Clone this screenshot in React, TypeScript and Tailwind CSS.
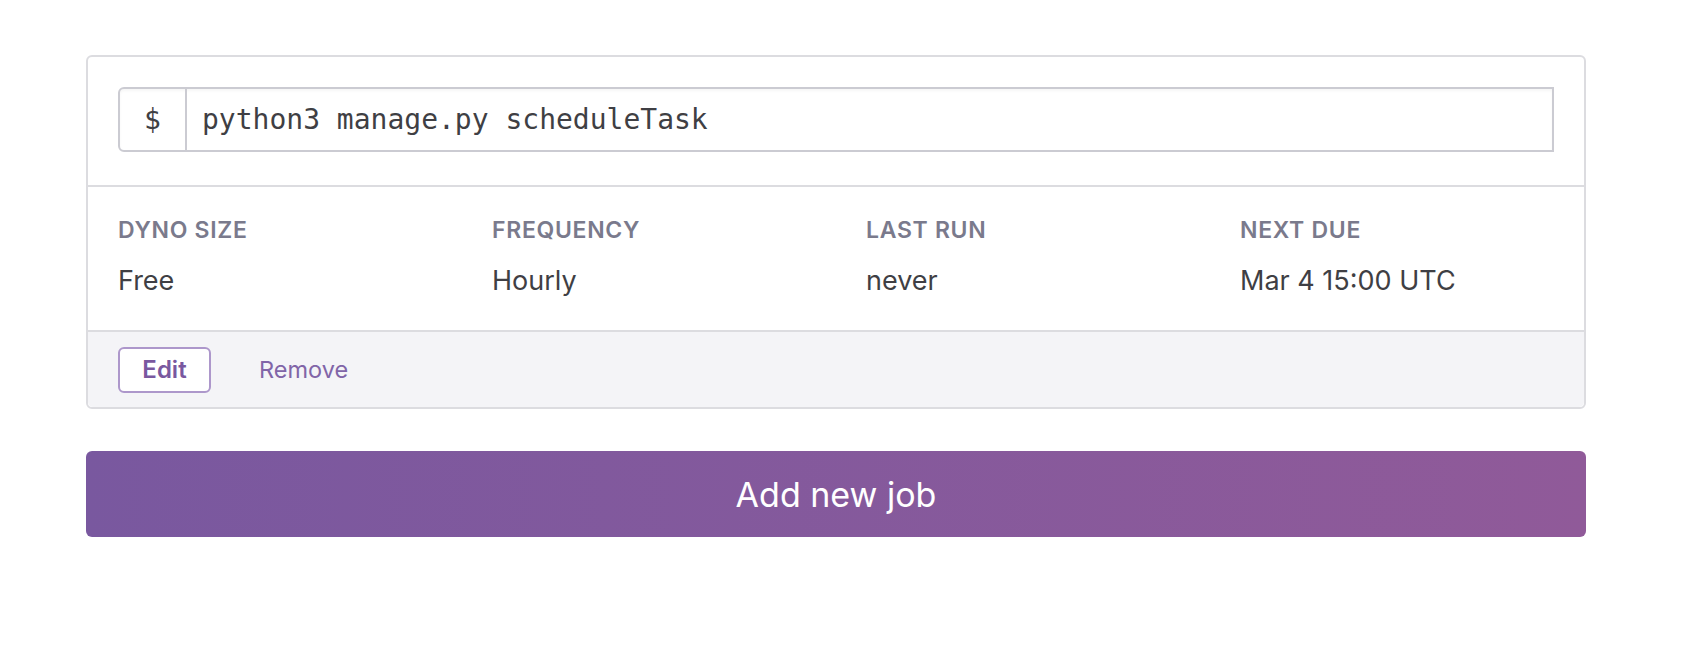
import React from 'react'

const details = [
  { label: 'DYNO SIZE', value: 'Free' },
  { label: 'FREQUENCY', value: 'Hourly' },
  { label: 'LAST RUN', value: 'never' },
  { label: 'NEXT DUE', value: 'Mar 4 15:00 UTC' },
]

export default function App() {
  return (
    <div className="min-h-[646px] bg-white pl-[86px] pt-[55px] font-['Inter',sans-serif]">
      <div className="w-[1500px]">
        <div className="rounded-[6px] border-2 border-[#dcdce0] bg-white">
          <div className="px-[30px] pt-[30px] pb-[33px]">
            <div className="flex h-[65px] items-stretch rounded-l-[6px] border-2 border-[#cbcbd2] bg-white shadow-[inset_0_2px_3px_rgba(0,0,0,0.04)]">
              <div className="flex w-[67px] items-center justify-center border-r-2 border-[#cbcbd2] font-['DejaVu_Sans_Mono',monospace] text-[28px] text-[#3f3f44]">
                $
              </div>
              <div className="flex items-center pl-[15px] font-['DejaVu_Sans_Mono',monospace] text-[28px] text-[#3f3f44]">
                python3 manage.py scheduleTask
              </div>
            </div>
          </div>
          <div className="flex border-t-2 border-[#dcdce0] px-[30px] pt-[30px] pb-[33px]">
            {details.map((d) => (
              <div key={d.label} className="w-[374px] shrink-0">
                <div className="text-[23px] leading-[26px] font-semibold tracking-[0.03em] text-[#7a7a8c]">{d.label}</div>
                <div className="mt-[22px] text-[27px] leading-[32px] text-[#3f3f44]">{d.value}</div>
              </div>
            ))}
          </div>
          <div className="flex items-center rounded-b-[5px] border-t-2 border-[#dcdce0] bg-[#f4f4f7] px-[30px] pt-[15px] pb-[14px]">
            <button className="flex h-[46px] w-[93px] items-center justify-center rounded-[6px] border-2 border-[#ad97cb] bg-white text-[24px] font-semibold text-[#79589f]">
              Edit
            </button>
            <button className="ml-[48px] text-[23.5px] text-[#8165a8]">Remove</button>
          </div>
        </div>
        <button className="mt-[42px] flex h-[86px] w-full items-center justify-center rounded-[6px] bg-gradient-to-r from-[#79589f] to-[#905a99] text-[34px] text-white">
          Add new job
        </button>
      </div>
    </div>
  )
}
